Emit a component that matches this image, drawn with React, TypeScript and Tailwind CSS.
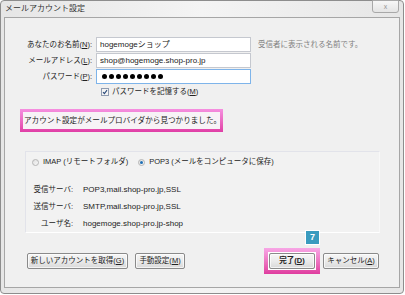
import React from "react";

const font = { fontFamily: '"Liberation Sans", "Noto Sans CJK JP", sans-serif' };

function Btn({ children, className = "" }: { children: React.ReactNode; className?: string }) {
  return (
    <div
      className={`h-[16px] flex items-center justify-center whitespace-nowrap rounded-[2px] border border-[#8a8a8a] bg-gradient-to-b from-[#f6f6f6] via-[#ebebeb] to-[#d9d9d9] text-[7.5px] text-[#222] shadow-[inset_0_0_0_1px_rgba(255,255,255,0.7)] ${className}`}
    >
      {children}
    </div>
  );
}

function Radio({ checked }: { checked?: boolean }) {
  return (
    <div className="w-[7px] h-[7px] rounded-full border border-[#b5b5b5] bg-gradient-to-br from-[#e0e0e0] to-[#f8f8f8] flex items-center justify-center">
      {checked && <div className="w-[3px] h-[3px] rounded-full bg-[#1f6fb5]" />}
    </div>
  );
}

export default function App() {
  return (
    <div className="w-[405px] h-[295px] bg-white" style={font}>
      <div className="h-[294px] w-[404px] rounded-[4px] border border-[#8d8d8d] bg-gradient-to-r from-[#e6e6e6] via-[#f4f4f4] to-[#e6e6e6] flex flex-col">
        {/* Title bar */}
        <div className="h-[16px] flex items-start justify-between">
          <span className="pl-[4px] pt-[3px] text-[8px] leading-[10px] text-[#333]">メールアカウント設定</span>
          <div className="mr-[4px] -mt-px w-[27px] h-[13px] rounded-b-[3px] border border-[#a8a8a8] bg-gradient-to-b from-[#f7f7f7] to-[#e4e4e4] flex items-center justify-center text-[7px] leading-none text-[#9a9a9a]">
            ⅹ
          </div>
        </div>

        {/* Panel */}
        <div className="mx-[3px] h-[271px] border border-[#a6a6a6] bg-[#f0f0f0] flex flex-col">
          {/* Form */}
          <div className="mt-[19px] grid grid-cols-[87px_155px_auto] gap-x-[4px] gap-y-[1px] items-center text-[7.5px] text-[#222]">
            <div className="text-right">
              あなたのお名前(<span className="underline">N</span>):
            </div>
            <div className="h-[15px] border border-[#c5c8cf] bg-white flex items-center pl-[3px] text-[8px]">
              hogemogeショップ
            </div>
            <div className="pl-[3px] text-[#808080] whitespace-nowrap">受信者に表示される名前です。</div>

            <div className="text-right">
              メールアドレス(<span className="underline">L</span>):
            </div>
            <div className="h-[15px] border border-[#c5c8cf] bg-white flex items-center pl-[3px] text-[8px]">
              shop@hogemoge.shop-pro.jp
            </div>
            <div />

            <div className="text-right">
              パスワード(<span className="underline">P</span>):
            </div>
            <div className="h-[15px] border border-[#7eb4ea] bg-white flex items-center gap-[2px] pl-[5px]">
              {Array.from({ length: 9 }).map((_, i) => (
                <span key={i} className="w-[5px] h-[5px] rounded-full bg-black" />
              ))}
            </div>
            <div />

            <div />
            <div className="h-[13px] flex items-center gap-[3px] pl-[5px]">
              <svg width="8" height="8" viewBox="0 0 8 8">
                <rect x="0.5" y="0.5" width="7" height="7" fill="#f4f4f4" stroke="#8f9bb0" />
                <path d="M2 4.2 L3.4 5.6 L6 2.2" fill="none" stroke="#2b4a7a" strokeWidth="1.1" />
              </svg>
              <span>
                パスワードを記憶する(<span className="underline">M</span>)
              </span>
            </div>
            <div />
          </div>

          {/* Highlight message */}
          <div className="mt-[11px] ml-[15px] w-[203px] h-[23px] p-[3px] bg-gradient-to-b from-[#f58fe0] to-[#e03ea6]">
            <div className="h-full bg-[#f7f3f6] flex items-center pl-px whitespace-nowrap text-[7.6px] text-[#222]">
              アカウント設定がメールプロバイダから見つかりました。
            </div>
          </div>

          {/* Group box */}
          <div className="mt-[19px] ml-[20px] w-[355px] h-[82px] border border-[#e2e3ea] border-b-white border-r-[#f8f8f8] bg-[#f2f2f2] flex flex-col text-[7.5px] text-[#222]">
            <div className="mt-[5px] h-[10px] flex items-center pl-[6px]">
              <Radio />
              <span className="ml-[4px]">IMAP (リモートフォルダ)</span>
              <div className="ml-[10px]">
                <Radio checked />
              </div>
              <span className="ml-[4px]">POP3 (メールをコンピュータに保存)</span>
            </div>
            <div className="mt-[17px] grid grid-cols-[43px_auto] gap-x-[10px] gap-y-[5px] pl-[4px]">
              <div className="text-right">受信サーバ:</div>
              <div className="text-[8px]">POP3,mail.shop-pro.jp,SSL</div>
              <div className="text-right">送信サーバ:</div>
              <div className="text-[8px]">SMTP,mail.shop-pro.jp,SSL</div>
              <div className="text-right">ユーザ名:</div>
              <div className="text-[8px]">hogemoge.shop-pro.jp-shop</div>
            </div>
          </div>

          {/* Buttons */}
          <div className="mt-[15px] flex items-center pl-[22px] pr-[20px]">
            <Btn className="w-[101px]">
              新しいアカウントを取得(<span className="underline">G</span>)
            </Btn>
            <Btn className="ml-[7px] w-[50px]">
              手動設定(<span className="underline">M</span>)
            </Btn>
            <div className="flex-1" />
            <div className="relative p-[4px] bg-gradient-to-b from-[#f7a6e6] to-[#df3c9f]">
              <div className="border border-white bg-[#f0f0f0]">
                <Btn className="w-[46px] font-bold">
                  完了(<span className="underline">D</span>)
                </Btn>
              </div>
              <div className="absolute right-0 -top-[18px] w-[15px] h-[15px] border border-white bg-[#3a9bbf] flex items-center justify-center text-[9px] font-bold text-white leading-none">
                7
              </div>
            </div>
            <Btn className="ml-[3px] w-[56px]">
              キャンセル(<span className="underline">A</span>)
            </Btn>
          </div>
        </div>
      </div>
    </div>
  );
}
